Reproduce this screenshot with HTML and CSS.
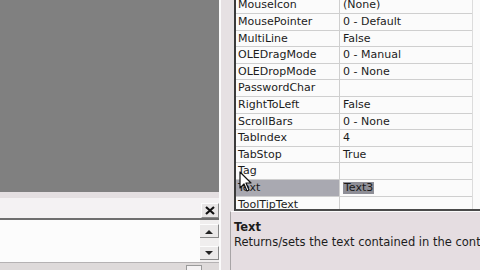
FILE: index.html
```html
<!DOCTYPE html>
<html>
<head>
    <meta charset="UTF-8">
    <title>Properties - Text3</title>
    <link rel="stylesheet" href="styles.css">
</head>
<body>
    <div class="screen">
        <div class="left">
            <div class="workspace"></div>
            <div class="splitter"></div>
            <div class="immediate">
                <div class="immediate-title">
                    <span class="close-btn">
                        <svg width="10" height="9" viewBox="0 0 10 9"><path d="M1 1 L9 8 M9 1 L1 8" stroke="#111" stroke-width="2.2"/></svg>
                    </span>
                </div>
                <div class="immediate-body">
                    <div class="scroll">
                        <span class="scroll-btn">
                            <svg width="8" height="5" viewBox="0 0 8 5"><path d="M0 5 L4 1 L8 5 Z" fill="#222"/></svg>
                        </span>
                        <span class="scroll-btn">
                            <svg width="8" height="5" viewBox="0 0 8 5"><path d="M0 0 L8 0 L4 4 Z" fill="#222"/></svg>
                        </span>
                    </div>
                </div>
                <div class="status">
                    <span class="status-tab"></span>
                </div>
            </div>
        </div>

        <div class="right">
            <div class="grid">
                <div class="rows">
                    <div class="row"><span class="name">MouseIcon</span><span class="value">(None)</span></div>
                    <div class="row"><span class="name">MousePointer</span><span class="value">0 - Default</span></div>
                    <div class="row"><span class="name">MultiLine</span><span class="value">False</span></div>
                    <div class="row"><span class="name">OLEDragMode</span><span class="value">0 - Manual</span></div>
                    <div class="row"><span class="name">OLEDropMode</span><span class="value">0 - None</span></div>
                    <div class="row"><span class="name">PasswordChar</span><span class="value"></span></div>
                    <div class="row"><span class="name">RightToLeft</span><span class="value">False</span></div>
                    <div class="row"><span class="name">ScrollBars</span><span class="value">0 - None</span></div>
                    <div class="row"><span class="name">TabIndex</span><span class="value">4</span></div>
                    <div class="row"><span class="name">TabStop</span><span class="value">True</span></div>
                    <div class="row"><span class="name">Tag</span><span class="value"></span></div>
                    <div class="row selected"><span class="name">Text</span><span class="value"><span class="edit">Text3</span></span></div>
                    <div class="row"><span class="name">ToolTipText</span><span class="value"></span></div>
                </div>
            </div>
            <div class="description">
                <div class="desc-title">Text</div>
                <div class="desc-text">Returns/sets the text contained in the control.</div>
            </div>
        </div>

        <svg class="cursor" width="14" height="22" viewBox="0 0 14 22">
            <path d="M1 1 L1 17 L5 13 L8 20 L10 19 L7 12 L12 12 Z" fill="#fff" stroke="#111" stroke-width="1.2" stroke-linejoin="round"/>
        </svg>
    </div>
</body>
</html>
```

FILE: styles.css
```css
body {
    margin: 0;
    font-family: "DejaVu Sans", Verdana, sans-serif;
    font-size: 11px;
    color: #1c1c1c;
}
.screen {
    position: relative;
    width: 480px;
    height: 270px;
    overflow: hidden;
    display: flex;
    background-color: #e6e1e3;
}
.left {
    flex: none;
    width: 219px;
    display: flex;
    flex-direction: column;
    border-right: 2px solid #fbfbfb;
}
.workspace {
    height: 192px;
    background-color: #808080;
}
.splitter {
    height: 6px;
    background-color: #e4dfe1;
}
.immediate {
    flex: 1;
    display: flex;
    flex-direction: column;
    background-color: #f4f2f3;
}
.immediate-title {
    height: 20px;
    display: flex;
    justify-content: flex-end;
    align-items: center;
    border-bottom: 2px solid #6e6e6e;
}
.close-btn {
    width: 16px;
    height: 13px;
    margin-top: 4px;
    display: flex;
    align-items: center;
    justify-content: center;
    background-color: #e8e6e6;
    border-top: 1px solid #fdfdfd;
    border-left: 1px solid #fdfdfd;
    border-right: 1px solid #8a8a8a;
    border-bottom: 1px solid #8a8a8a;
}
.immediate-body {
    flex: 1;
    display: flex;
    justify-content: flex-end;
    background-color: #fcfcfc;
}
.scroll {
    width: 19px;
    display: flex;
    flex-direction: column;
    justify-content: space-between;
    padding: 4px 0 2px;
    background-color: #f0eeee;
}
.scroll-btn {
    height: 12px;
    display: flex;
    align-items: center;
    justify-content: center;
    background-color: #ebe9e9;
    border-top: 1px solid #fdfdfd;
    border-right: 1px solid #8a8a8a;
    border-bottom: 1px solid #8a8a8a;
}
.status {
    height: 7px;
    position: relative;
    background-color: #dedada;
    border-top: 1px solid #b5b2b3;
}
.status-tab {
    position: absolute;
    left: 186px;
    top: 2px;
    width: 14px;
    height: 6px;
    background-color: #f4f2f3;
    border: 1px solid #9a9a9a;
    border-bottom: none;
}
.right {
    flex: 1;
    min-width: 0;
    display: flex;
    flex-direction: column;
    padding-left: 13px;
}
.grid {
    height: 211px;
    overflow: hidden;
    background-color: #fbfbfb;
    border-left: 2px solid #3a3a3a;
    border-bottom: 2px solid #4a4a4a;
    box-sizing: border-box;
}
.rows {
    margin-top: -2.6px;
    margin-right: 7px;
    border-right: 1px solid #dcdcdc;
}
.row {
    height: 16.6px;
    display: flex;
    box-sizing: border-box;
    border-bottom: 1px solid #cfcfcf;
}
.name {
    flex: none;
    width: 101px;
    padding-left: 2px;
    line-height: 16px;
    white-space: nowrap;
    overflow: hidden;
    border-right: 1px solid #cfcfcf;
}
.value {
    flex: 1;
    padding-left: 3px;
    line-height: 16px;
    white-space: nowrap;
}
.selected .name {
    background-color: #a9a9b1;
}
.edit {
    display: inline-block;
    line-height: 12px;
    padding: 0 1px;
    background-color: #8e8e96;
    color: #1a1a1a;
}
.description {
    flex: 1;
    margin-left: -4px;
    padding: 8px 0 0 3px;
    background-color: #e5dde1;
    border-top: 1px solid #fbfbfb;
    border-left: 1px solid #a8a4a6;
    white-space: nowrap;
    overflow: hidden;
    font-size: 11.5px;
}
.desc-title {
    font-weight: bold;
    line-height: 14px;
}
.desc-text {
    line-height: 16px;
}
.cursor {
    position: absolute;
    left: 239px;
    top: 171px;
}
```
